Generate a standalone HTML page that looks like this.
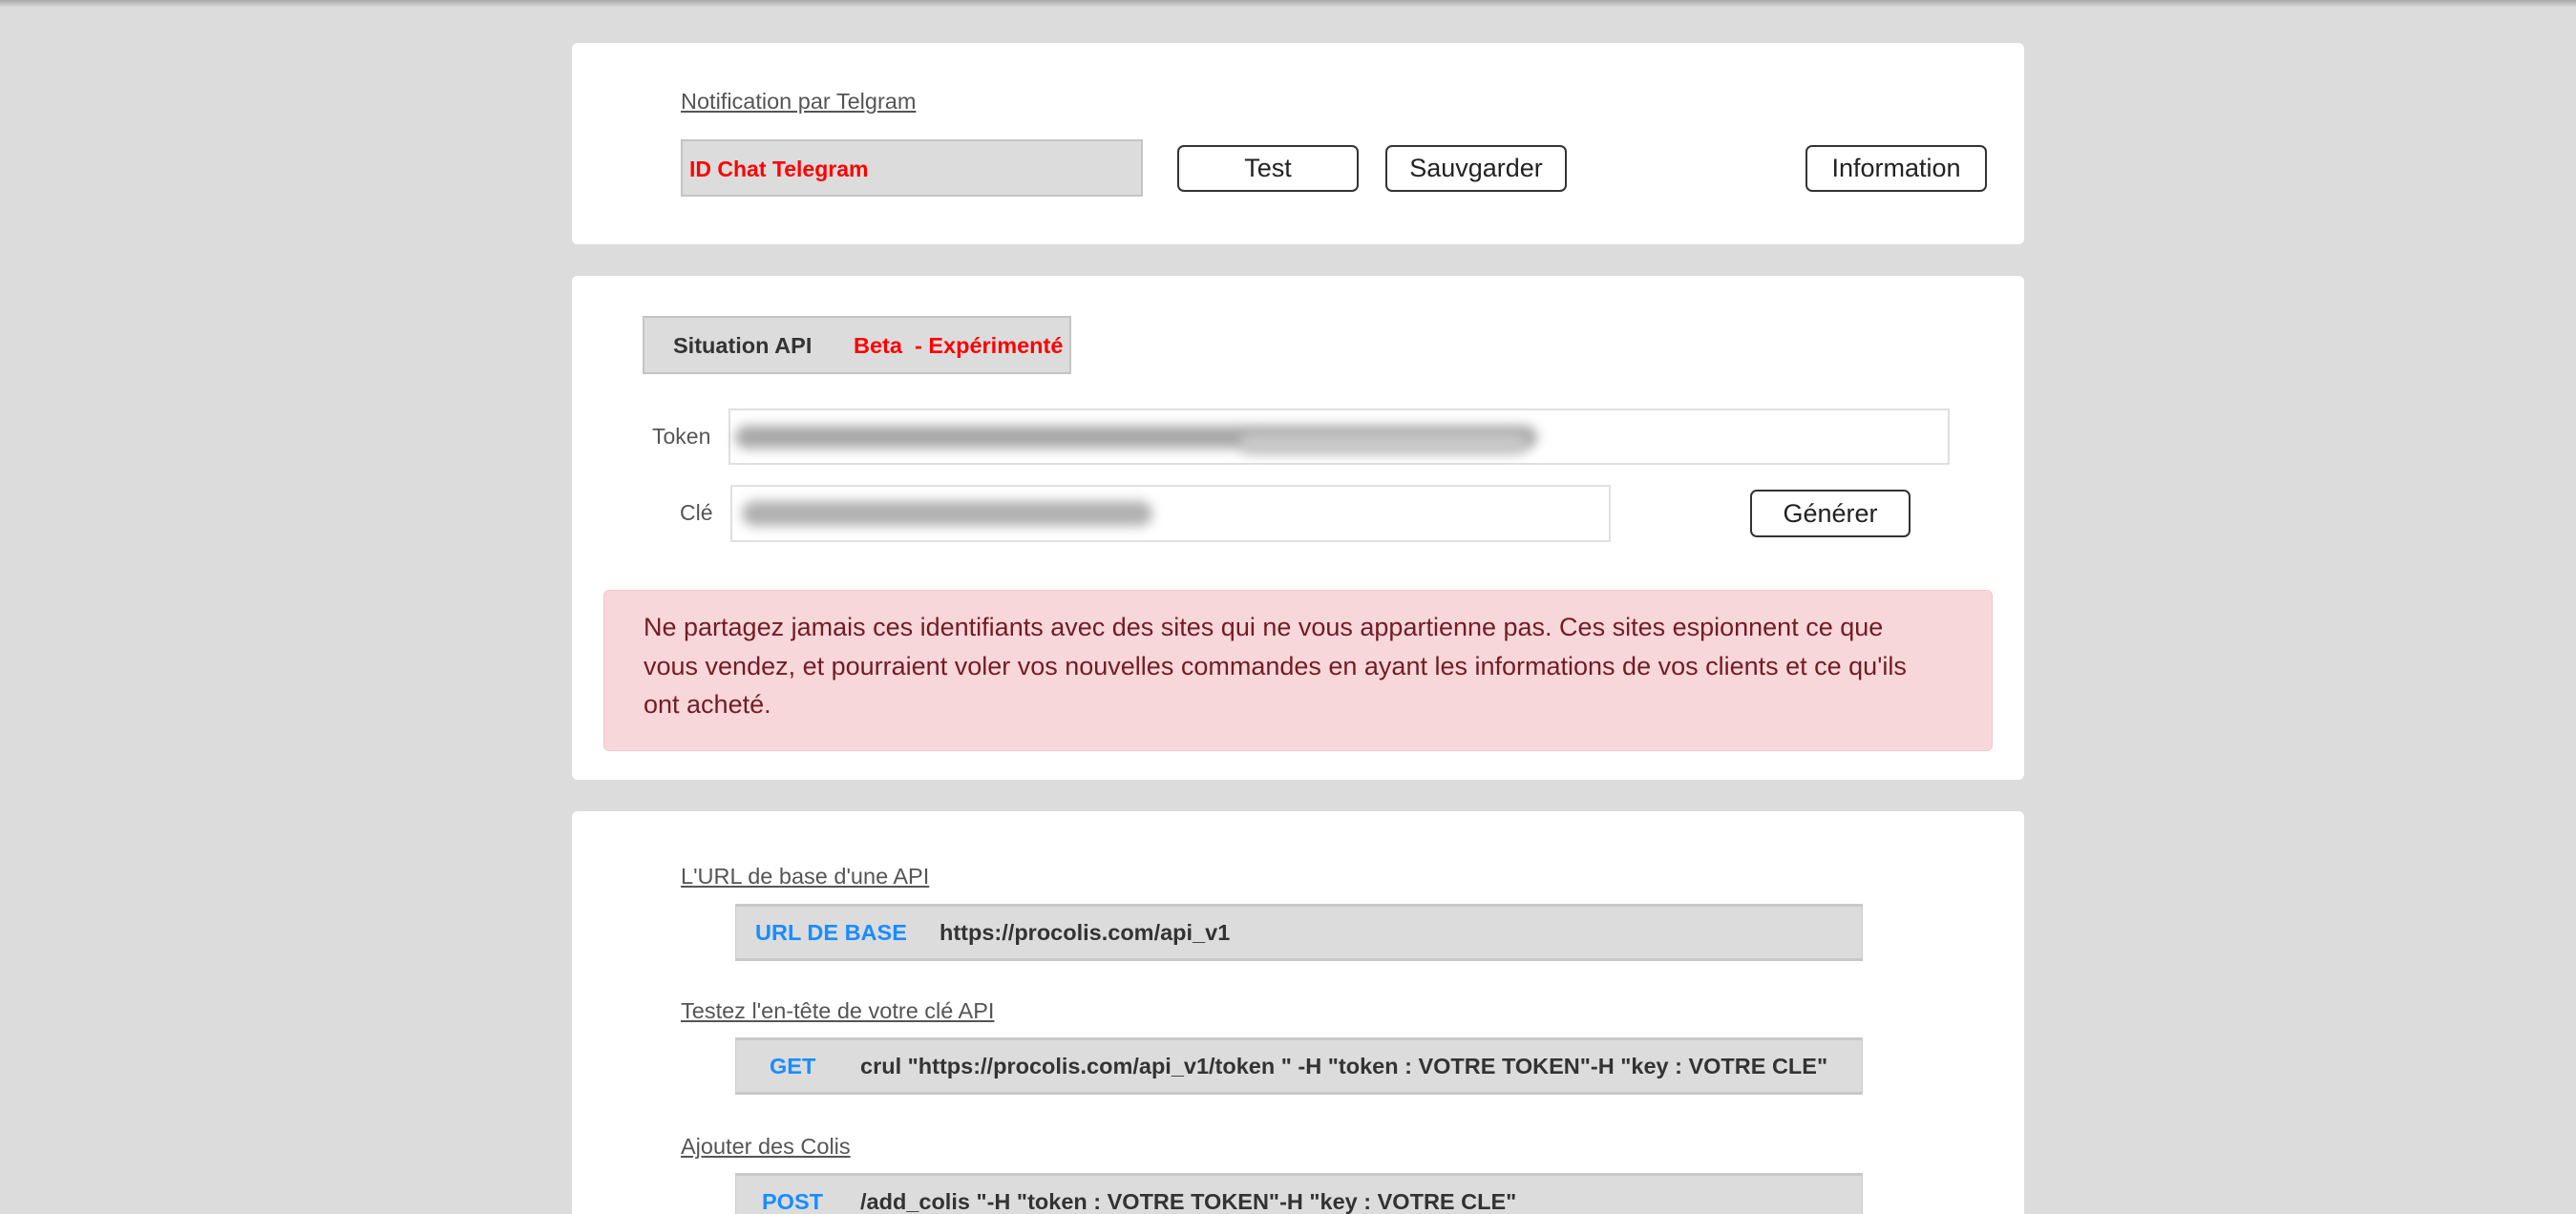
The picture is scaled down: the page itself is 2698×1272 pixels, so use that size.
<!DOCTYPE html>
<html><head><meta charset="utf-8"><style>
*{box-sizing:border-box;margin:0;padding:0}
html,body{width:2698px;height:1272px;overflow:hidden}
body{background:#dcdcdc;font-family:"Liberation Sans",Arial,sans-serif;position:relative}
.topsh{position:absolute;left:0;top:0;width:100%;height:8px;background:linear-gradient(#a8a8a8,#dcdcdc)}
.card{position:absolute;background:#fff;border-radius:6px;left:599px;width:1521px}
.a{position:absolute}
.lbl{font-size:23.5px;color:#555;text-decoration:underline;line-height:1}
.btn{position:absolute;border:2px solid #333;border-radius:7px;background:#fff;font-size:27px;color:#222;display:flex;align-items:center;justify-content:center}
.gray{position:absolute;background:#dcdcdc;border:2px solid #c4c4c4}
.code{position:absolute;left:171px;width:1181px;height:60px;background:#dcdcdc;border-top:3px solid #c8c8c8;border-bottom:3px solid #c8c8c8;border-left:1px solid #ccc;border-right:1px solid #ccc;font-weight:bold;font-size:23.5px;color:#333;line-height:54px}
.code b{position:absolute;color:#1a8cff}
.code span{position:absolute;white-space:nowrap}
.inp{position:absolute;border:2px solid #e0e0e0;background:#fff}
.blob{position:absolute;background:#a8a8a8;filter:blur(6px);border-radius:15px}
</style></head><body>
<div class="topsh"></div>

<div class="card" style="top:45px;height:211px">
  <div class="a lbl" style="left:114px;top:50px">Notification par Telgram</div>
  <div class="gray" style="left:114px;top:101px;width:484px;height:60px"><span style="position:absolute;left:7px;top:16px;color:#ff0000;font-weight:bold;font-size:23px">ID Chat Telegram</span></div>
  <div class="btn" style="left:634px;top:107px;width:190px;height:49px">Test</div>
  <div class="btn" style="left:852px;top:107px;width:190px;height:49px">Sauvgarder</div>
  <div class="btn" style="left:1292px;top:107px;width:190px;height:49px">Information</div>
</div>

<div class="card" style="top:289px;height:528px">
  <div class="gray" style="left:74px;top:42px;width:449px;height:61px;overflow:hidden;white-space:nowrap"><span style="position:absolute;left:30px;top:16px;font-weight:bold;font-size:23.5px;color:#333">Situation API</span><span style="position:absolute;left:219px;top:16px;font-weight:bold;font-size:23.5px;color:#ff0000">Beta&nbsp; - Expérimenté</span></div>
  <div class="a" style="left:84px;top:155px;font-size:23px;color:#555">Token</div>
  <div class="inp" style="left:164px;top:139px;width:1279px;height:59px"></div>
  <div class="blob" style="left:171px;top:157px;width:840px;height:24px"></div>
  <div class="blob" style="left:700px;top:165px;width:300px;height:22px;background:#c8c8c8"></div>
  <div class="a" style="left:113px;top:235px;font-size:23px;color:#555">Clé</div>
  <div class="inp" style="left:166px;top:219px;width:922px;height:60px"></div>
  <div class="blob" style="left:178px;top:236px;width:430px;height:26px;background:#b0b0b0"></div>
  <div class="btn" style="left:1234px;top:224px;width:168px;height:50px">Générer</div>
  <div class="a" style="left:33px;top:329px;width:1455px;height:169px;background:#f8d7da;border-radius:6px;border:1px solid #f5c6cb;color:#721c24;font-size:27px;line-height:40.5px;padding:18px 83px 0 41px">Ne partagez jamais ces identifiants avec des sites qui ne vous appartienne pas. Ces sites espionnent ce que vous vendez, et pourraient voler vos nouvelles commandes en ayant les informations de vos clients et ce qu'ils ont acheté.</div>
</div>

<div class="card" style="top:850px;height:460px">
  <div class="a lbl" style="left:114px;top:57px">L'URL de base d'une API</div>
  <div class="code" style="top:97px"><b style="left:20px">URL DE BASE</b><span style="left:213px">https://procolis.com/api_v1</span></div>
  <div class="a lbl" style="left:114px;top:198px">Testez l'en-tête de votre clé API</div>
  <div class="code" style="top:237px"><b style="left:35px">GET</b><span style="left:130px">crul "https://procolis.com/api_v1/token " -H "token : VOTRE TOKEN"-H "key : VOTRE CLE"</span></div>
  <div class="a lbl" style="left:114px;top:340px">Ajouter des Colis</div>
  <div class="code" style="top:379px"><b style="left:27px">POST</b><span style="left:130px">/add_colis "-H "token : VOTRE TOKEN"-H "key : VOTRE CLE"</span></div>
</div>
</body></html>
